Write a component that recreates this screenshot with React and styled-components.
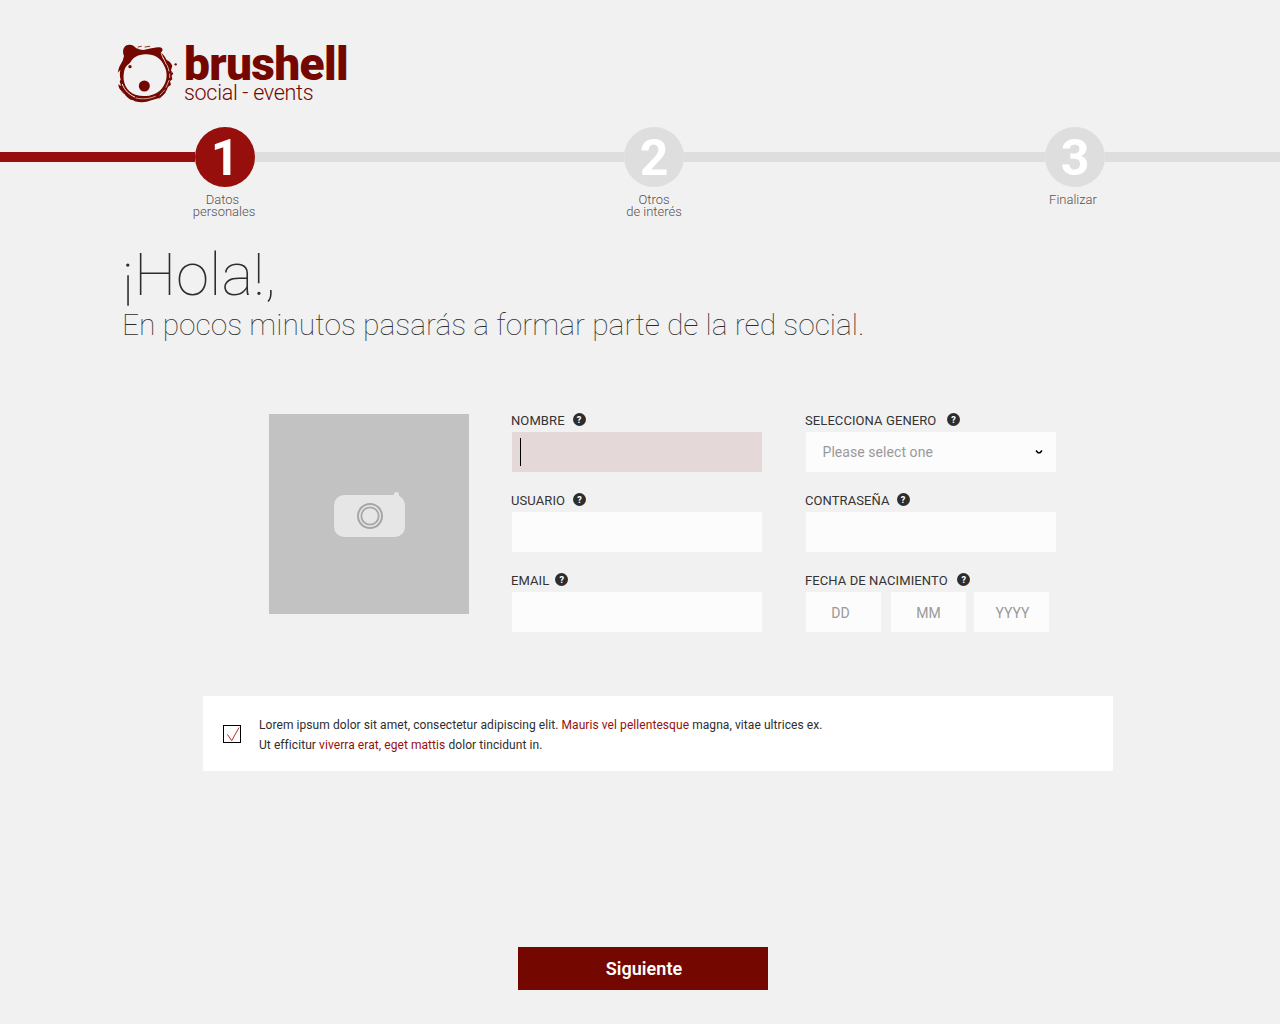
import React from "react";
import styled, { createGlobalStyle } from "styled-components";

const GlobalStyle = createGlobalStyle`
  * { box-sizing: border-box; }
  body {
    margin: 0;
    background: #f1f1f1;
    font-family: Roboto, "Liberation Sans", sans-serif;
    color: #333;
  }
`;

const Page = styled.div`
  width: 1280px;
  height: 1024px;
  overflow: hidden;
  display: flex;
  flex-direction: column;
  background: #f1f1f1;
`;

const Header = styled.header`
  display: flex;
  height: 127px;
  padding: 44px 0 0 117px;
  color: #740800;
`;

const Brand = styled.div`
  display: flex;
  flex-direction: column;
  margin-left: 5px;
  white-space: nowrap;
`;

const BrandName = styled.div`
  padding-top: 1px;
  font-size: 46px;
  font-weight: 900;
  line-height: 39px;
  letter-spacing: -0.65px;
`;

const BrandTag = styled.div`
  font-size: 21.5px;
  font-weight: 300;
  line-height: 18px;
  letter-spacing: -0.3px;
`;

const Steps = styled.nav`
  display: flex;
  align-items: flex-start;
  height: 113px;
`;

const Track = styled.div`
  width: ${(p) => p.$w}px;
  height: 10px;
  margin-top: 25px;
  background: ${(p) => (p.$done ? "#970f0d" : "#dedede")};
`;

const Step = styled.div`
  width: 60px;
  display: flex;
  flex-direction: column;
  align-items: center;
`;

const StepCircle = styled.div`
  width: 60px;
  height: 60px;
  border-radius: 50%;
  background: ${(p) => (p.$active ? "#970f0d" : "#dedede")};
  color: #fff;
  font-size: 50px;
  font-weight: 700;
  line-height: 62px;
  text-align: center;
`;

const StepLabel = styled.div`
  margin-top: 7px;
  margin-left: ${(p) => p.$shift || 0}px;
  font-size: 13px;
  font-weight: 300;
  line-height: 12px;
  text-align: center;
  white-space: pre;
  color: #5a5050;
`;

const Greeting = styled.section`
  height: 174px;
  padding-left: 122px;
  font-weight: 100;
  color: #2d2d2d;
  white-space: nowrap;
`;

const Title = styled.h1`
  margin: 0;
  padding-top: 1px;
  font-size: 60px;
  font-weight: 100;
  line-height: 67px;
`;

const Subtitle = styled.p`
  margin: 0;
  font-size: 30px;
  line-height: 34px;
  letter-spacing: -0.01px;
`;

const Form = styled.form`
  display: flex;
  height: 282px;
  padding-left: 269px;
`;

const Photo = styled.div`
  width: 200px;
  height: 200px;
  padding: 78px 0 0 65px;
  background: #c2c2c2;
`;

const Column = styled.div`
  display: flex;
  flex-direction: column;
  width: 250px;
  margin-left: ${(p) => p.$left}px;
`;

const Field = styled.div`
  height: 80px;
  margin-top: ${(p) => (p.$first ? -2 : 0)}px;
`;

const LabelRow = styled.div`
  display: flex;
  height: 20px;
  gap: ${(p) => p.$gap}px;
  margin-left: -1px;
`;

const Label = styled.label`
  font-size: 13px;
  line-height: 17px;
  letter-spacing: 0.09px;
  color: #333;
  white-space: nowrap;
`;

const Help = styled.span`
  width: 13px;
  height: 13px;
  margin-top: 1px;
  border-radius: 50%;
  background: #2d2d2d;
  color: #fff;
  font-size: 9px;
  font-weight: 800;
  line-height: 14px;
  text-align: center;
`;

const Input = styled.div`
  display: flex;
  align-items: center;
  height: 40px;
  padding: 0 8px;
  background: ${(p) => (p.$focus ? "#e4d8d8" : "#fcfcfc")};
`;

const Caret = styled.span`
  width: 1px;
  height: 28px;
  background: #000;
`;

const Select = styled(Input)`
  justify-content: space-between;
  padding: 0 13px 0 16.5px;
  font-size: 14px;
  letter-spacing: 0.06px;
  color: #999;
`;

const DateRow = styled.div`
  display: flex;
`;

const DatePart = styled(Input)`
  justify-content: center;
  width: 75px;
  margin-right: ${(p) => p.$gap || 0}px;
  padding: 2px ${(p) => p.$right || 0}px 0 ${(p) => p.$left || 0}px;
  font-size: 14px;
  color: #999;
`;

const Terms = styled.section`
  display: flex;
  width: 910px;
  height: 75px;
  margin-left: 203px;
  padding: 19px 0 0 20px;
  background: #fff;
`;

const Check = styled.span`
  display: block;
  width: 18px;
  height: 18px;
  margin: 10px 18px 0 0;
  border: 1px solid #000;
`;

const TermsText = styled.p`
  margin: 0;
  font-size: 12px;
  line-height: 20px;
  letter-spacing: 0.07px;
  color: #2d2d2d;
`;

const Accent = styled.span`
  color: #970f0d;
`;

const Next = styled.button`
  width: 250px;
  height: 43px;
  margin: 176px 0 0 518px;
  padding: 0 0 0 2px;
  border: 0;
  background: #740800;
  color: #fff;
  font-family: inherit;
  font-size: 18px;
  font-weight: 600;
  letter-spacing: 0.05px;
`;

const BearLogo = () => (
  <svg width="62" height="60" viewBox="21 18 186 180" fill="#740800">
    <path
      fillRule="evenodd"
      d="M42 54 C34 34 44 20 58 20 C69 20 75 26 79 31 C90 34 100 37 111 34 C124 31 142 26 154 29 C160 33 158 40 152 43 C160 49 166 58 170 66 C178 70 184 75 187 84 C185 91 182 95 184 103 L190 106 L185 114 L187 124 L180 130 L183 140 L174 147 C170 161 160 172 148 180 L124 187 C108 194 91 194 74 190 L70 187 C62 187 54 180 48 174 L38 161 C29 155 25 147 25 139 L33 144 L29 130 L32 125 C29 116 29 106 31 96 L24 104 C24 90 32 78 38 68 Z
      M42 102 C36 133 49 160 76 170 C104 179 137 173 155 152 C172 132 175 103 161 80 C151 60 132 48 106 49 C84 50 70 58 62 72 C54 82 47 80 42 102 Z"
    />
    <circle cx="103" cy="144" r="16.5" />
    <circle cx="60" cy="86" r="5" />
    <circle cx="197" cy="79" r="3.5" />
    <g fill="none" stroke="#f1f1f1" strokeLinecap="round">
      <path strokeWidth="4" d="M87 32 L102 33 M111 29 L131 28" />
      <path strokeWidth="2.5" d="M154 47 L160 62 M160 60 L169 80 M172 83 L177 99" />
      <path strokeWidth="3" d="M37 139 C44 158 57 169 74 177" />
      <path strokeWidth="2" d="M78 180 C99 185 119 182 136 175 M150 171 L164 156" />
      <path strokeWidth="2" d="M168 148 L177 127 M179 119 L179 108" />
    </g>
    <g fill="none" stroke="#740800" strokeLinecap="round">
      <path strokeWidth="2.5" d="M84 27 L94 25 M105 27 L119 25 M149 55 L160 74 M160 70 L172 91" />
      <path strokeWidth="2" d="M177 94 L187 103 M28 148 L40 166 M149 181 L166 164" />
    </g>
  </svg>
);

const Camera = () => (
  <svg width="72" height="46" viewBox="0 0 72 46">
    <rect y="3" width="71" height="42" rx="10" fill="#e6e6e6" />
    <path d="M60 6 V2.5 A2.5 2.5 0 0 1 65 2.5 V8 H60Z" fill="#e6e6e6" />
    <circle cx="36" cy="24" r="12" fill="none" stroke="#a6a6a6" strokeWidth="2" />
    <circle cx="36" cy="24" r="8.7" fill="none" stroke="#a6a6a6" strokeWidth="1.8" />
  </svg>
);

const Chevron = () => (
  <svg width="8" height="6" viewBox="0 0 8 6">
    <path d="M1 1.5 L3 3.7 H5 L7 1.5" fill="none" stroke="#000" strokeWidth="1.6" />
  </svg>
);

const FormField = ({ label, gap, first, children }) => (
  <Field $first={first}>
    <LabelRow $gap={gap}>
      <Label>{label}</Label>
      <Help>?</Help>
    </LabelRow>
    {children}
  </Field>
);

export default function App() {
  return (
    <Page>
      <GlobalStyle />
      <Header>
        <BearLogo />
        <Brand>
          <BrandName>brushell</BrandName>
          <BrandTag>social - events</BrandTag>
        </Brand>
      </Header>
      <Steps>
        <Track $w={195} $done />
        <Step>
          <StepCircle $active>1</StepCircle>
          <StepLabel $shift={-2}>{"Datos \npersonales"}</StepLabel>
        </Step>
        <Track $w={369} />
        <Step>
          <StepCircle>2</StepCircle>
          <StepLabel>{"Otros\nde interés"}</StepLabel>
        </Step>
        <Track $w={361} />
        <Step>
          <StepCircle>3</StepCircle>
          <StepLabel $shift={-4}>Finalizar</StepLabel>
        </Step>
        <Track $w={175} />
      </Steps>
      <Greeting>
        <Title>¡Hola!,</Title>
        <Subtitle>En pocos minutos pasarás a formar parte de la red social.</Subtitle>
      </Greeting>
      <Form>
        <Photo>
          <Camera />
        </Photo>
        <Column $left={43}>
          <FormField first label="NOMBRE" gap={8}>
            <Input $focus>
              <Caret />
            </Input>
          </FormField>
          <FormField label="USUARIO" gap={8}>
            <Input />
          </FormField>
          <FormField label="EMAIL" gap={6}>
            <Input />
          </FormField>
        </Column>
        <Column $left={44}>
          <FormField first label="SELECCIONA GENERO" gap={10.6}>
            <Select>
              Please select one
              <Chevron />
            </Select>
          </FormField>
          <FormField label="CONTRASEÑA" gap={7}>
            <Input />
          </FormField>
          <FormField label="FECHA DE NACIMIENTO" gap={9.5}>
            <DateRow>
              <DatePart $gap={10} $right={6}>DD</DatePart>
              <DatePart $gap={8}>MM</DatePart>
              <DatePart $left={2}>YYYY</DatePart>
            </DateRow>
          </FormField>
        </Column>
      </Form>
      <Terms>
        <Check>
          <svg width="16" height="16" viewBox="0 0 16 16" fill="none" stroke="#b8322f">
            <path d="M3.3 8.3 L7.7 14.7 L15 1.5" />
          </svg>
        </Check>
        <TermsText>
          Lorem ipsum dolor sit amet, consectetur adipiscing elit. <Accent>Mauris vel pellentesque</Accent> magna, vitae ultrices ex.
          <br />
          Ut efficitur <Accent>viverra erat, eget mattis</Accent> dolor tincidunt in.
        </TermsText>
      </Terms>
      <Next type="button">Siguiente</Next>
    </Page>
  );
}
